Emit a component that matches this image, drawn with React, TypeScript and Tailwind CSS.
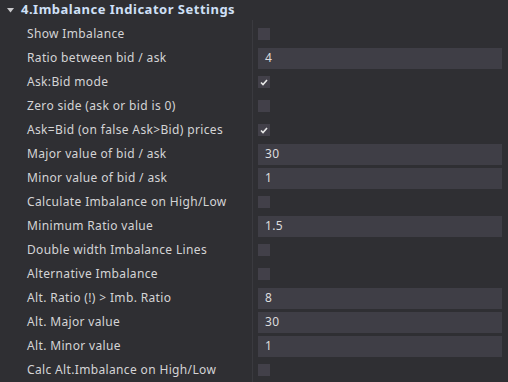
import React from 'react';

type Row = { label: string; kind: 'check' | 'text'; value?: string; checked?: boolean };

const rows: Row[] = [
  { label: 'Show Imbalance', kind: 'check', checked: false },
  { label: 'Ratio between bid / ask', kind: 'text', value: '4' },
  { label: 'Ask:Bid mode', kind: 'check', checked: true },
  { label: 'Zero side (ask or bid is 0)', kind: 'check', checked: false },
  { label: 'Ask=Bid (on false Ask>Bid) prices', kind: 'check', checked: true },
  { label: 'Major value of bid / ask', kind: 'text', value: '30' },
  { label: 'Minor value of bid / ask', kind: 'text', value: '1' },
  { label: 'Calculate Imbalance on High/Low', kind: 'check', checked: false },
  { label: 'Minimum Ratio value', kind: 'text', value: '1.5' },
  { label: 'Double width Imbalance Lines', kind: 'check', checked: false },
  { label: 'Alternative Imbalance', kind: 'check', checked: false },
  { label: 'Alt. Ratio (!) > Imb. Ratio', kind: 'text', value: '8' },
  { label: 'Alt. Major value', kind: 'text', value: '30' },
  { label: 'Alt. Minor value', kind: 'text', value: '1' },
  { label: 'Calc Alt.Imbalance on High/Low', kind: 'check', checked: false },
];

const Check: React.FC<{ checked?: boolean }> = ({ checked }) => (
  <div className="w-[12px] h-[12px] bg-[#424049] flex items-center justify-center">
    {checked && (
      <svg width="8" height="7" viewBox="0 0 8 7">
        <path d="M1 3.5 L3 5.5 L7 1" stroke="#e8e8e8" strokeWidth="1.6" fill="none" />
      </svg>
    )}
  </div>
);

export default function App() {
  return (
    <div
      className="w-[508px] h-[382px] bg-[#2f2f33] text-[#d4d4d6] overflow-hidden"
      style={{ fontFamily: '"Noto Sans", "Open Sans", sans-serif' }}
    >
      {/* section header */}
      <div className="h-[20px] flex items-center pl-[7px]">
        <svg width="7" height="5" viewBox="0 0 7 5" className="mr-[7px]">
          <path d="M0 0 L7 0 L3.5 4.5 Z" fill="#c9c9cc" />
        </svg>
        <span className="text-[13px] font-bold text-[#cfe0f7] tracking-[0.5px]">4.Imbalance Indicator Settings</span>
      </div>
      <div className="grid grid-cols-[252px_1px_1fr] pt-[2px]">
        <div className="flex flex-col">
          {rows.map((r) => (
            <div key={r.label} className="h-[24px] flex items-center pl-[27px] text-[12px] tracking-[0.35px]">
              {r.label}
            </div>
          ))}
        </div>
        <div className="bg-[#3a3a3f] -mt-[2px] h-[362px]" />
        <div className="flex flex-col pl-[5px] pr-[6px]">
          {rows.map((r) => (
            <div key={r.label} className="h-[24px] flex items-center">
              {r.kind === 'check' ? (
                <Check checked={r.checked} />
              ) : (
                <div className="h-[21px] w-full bg-[#3f3e46] flex items-center pl-[7px] text-[12px] tracking-[0.35px] text-[#dcdcde]">
                  {r.value}
                </div>
              )}
            </div>
          ))}
        </div>
      </div>
    </div>
  );
}
